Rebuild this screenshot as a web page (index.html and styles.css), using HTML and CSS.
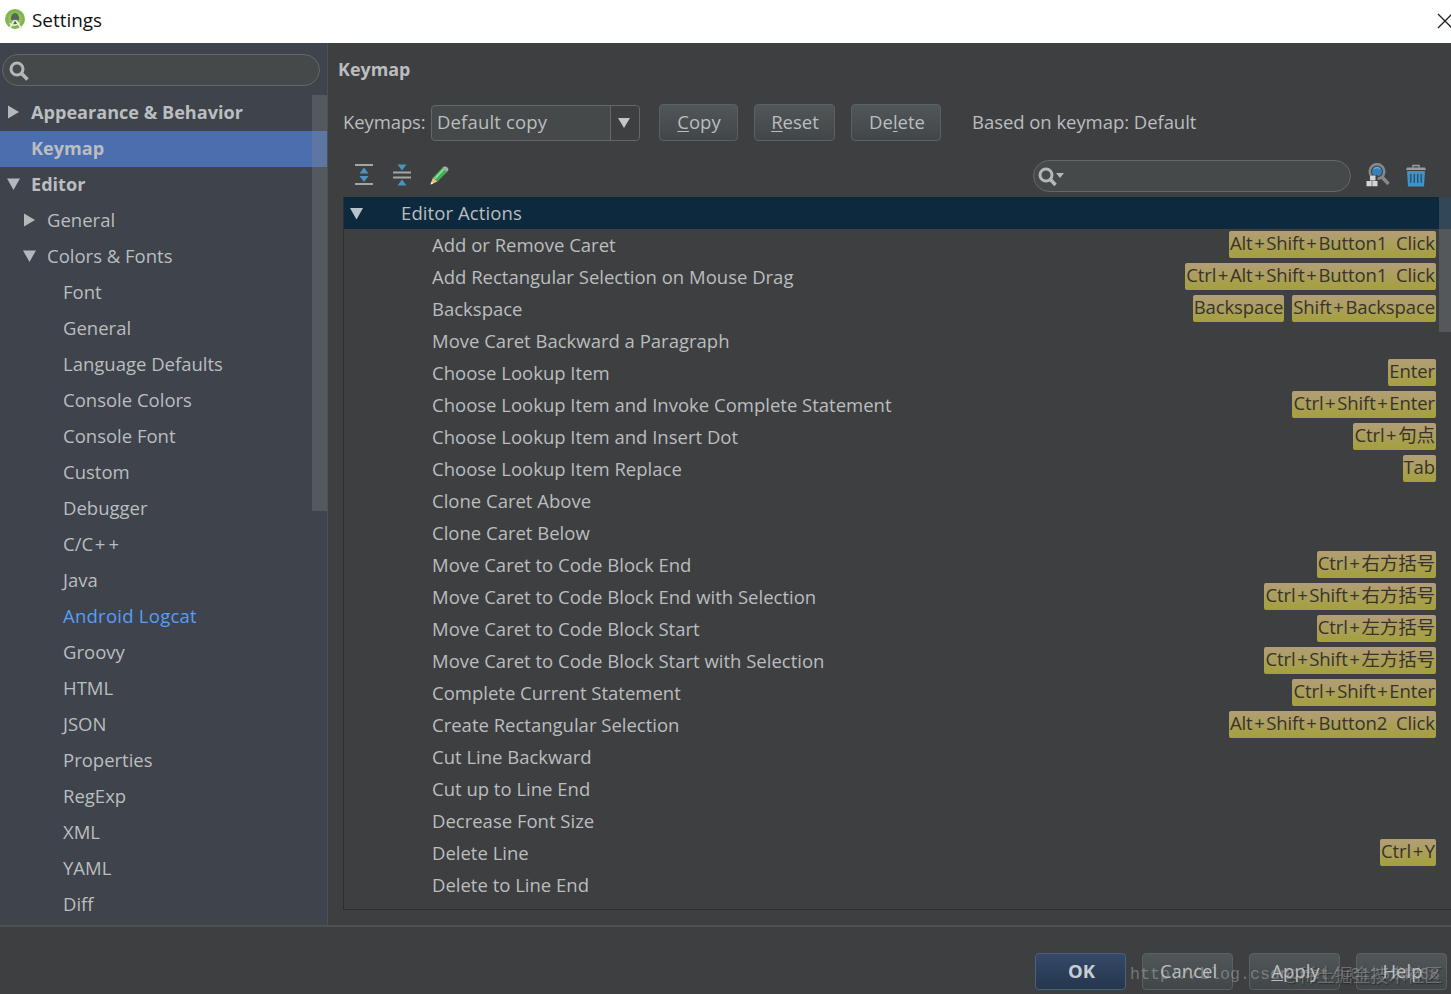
FILE: index.html
```html
<!DOCTYPE html>
<html lang="en">
<head>
<meta charset="utf-8">
<title>Settings</title>
<link rel="stylesheet" href="styles.css">
</head>
<body>
<div class="window">
  <header class="titlebar">
    <svg class="app-icon" width="22" height="22" viewBox="0 0 22 22"><circle cx="11" cy="10" r="10" fill="#7fb848"/><circle cx="11" cy="10" r="7" fill="#8fbe60"/><path d="M7 9.500a4 5.500 0 0 1 8 0v1.500H7zM9 9h4v6H9z" fill="#596454"/><path d="M10.500 11 5 20.500M11.500 11l6.500 9.500M5.500 14.500q5 4 10-1" stroke="#f0f5ea" stroke-width="1.500" fill="none"/></svg>
    <span class="window-title">Settings</span>
    <svg class="close" width="14" height="16" viewBox="0 0 14 16"><path d="M1 1 15 15M15 1 1 15" stroke="#222" stroke-width="1.300"/></svg>
  </header>
  <div class="body">
    <aside class="sidebar">
      <div class="search side-search"><svg width="20" height="20" viewBox="0 0 20 20"><circle cx="8" cy="8" r="6" fill="none" stroke="#b5b7b8" stroke-width="3"/><path d="M12 12l6.500 6.500" stroke="#b5b7b8" stroke-width="3.500"/></svg></div>
      <nav class="tree" id="tree"></nav>
      <div class="side-thumb"></div>
    </aside>
    <main class="content">
      <h1 class="heading">Keymap</h1>
      <div class="controls">
        <span class="label">Keymaps:</span>
        <div class="combo"><span class="combo-text">Default copy</span><span class="combo-arrow"><svg width="12" height="10" viewBox="0 0 12 10"><path d="M0 0h12L6 10z" fill="#c3c5c6"/></svg></span></div>
        <button class="btn copy"><span><u>C</u>opy</span></button>
        <button class="btn reset"><span><u>R</u>eset</span></button>
        <button class="btn delete"><span>De<u>l</u>ete</span></button>
        <span class="based">Based on keymap: Default</span>
      </div>
      <div class="toolbar">
        <svg class="expand" width="18" height="22" viewBox="0 0 18 22"><path d="M0 1h18M0 20h18" stroke="#a3a5a7" stroke-width="2"/><path d="M9 3.500l4.500 6h-9zM9 18l4.500-6h-9z" fill="#4a94c4"/></svg>
        <svg class="collapse" width="18" height="22" viewBox="0 0 18 22"><path d="M0 8.500h18M0 13.500h18" stroke="#a3a5a7" stroke-width="2"/><path d="M9 6.500l4.500-6h-9zM9 15.500l4.500 6h-9z" fill="#4a94c4"/></svg>
        <svg class="pencil" width="19" height="19" viewBox="0 0 19 19"><path d="M.5 18.500 3 11.500 7.500 15.500z" fill="#efc283"/><path d="M.5 18.500l.9-3 2 2z" fill="#eee"/><path d="M3 11.500 12 2l5 4-9.500 9.500z" fill="#42ad55"/><path d="M4 12 13 2.500l1.500 1.200-9 9.800z" fill="#85dc8d"/><path d="M12 2l2.500-1.800q4 .8 4 3.800L17 6z" fill="#9fb0a2"/></svg>
        <div class="search key-search"><svg width="28" height="20" viewBox="0 0 28 20"><circle cx="8" cy="8" r="6" fill="none" stroke="#b5b7b8" stroke-width="3"/><path d="M12 12l5.500 6" stroke="#b5b7b8" stroke-width="3.500"/><path d="M18 6h8l-4 5z" fill="#b5b7b8"/></svg></div>
        <svg class="find" width="24" height="24" viewBox="0 0 24 24"><circle cx="11" cy="8.500" r="7.300" fill="none" stroke="#85888a" stroke-width="2.600"/><circle cx="11" cy="8.500" r="5" fill="#387fb5"/><path d="M8 6q3-3 6 0" stroke="#69a9d3" stroke-width="1.500" fill="none"/><path d="M16 14l6.500 7" stroke="#85888a" stroke-width="3.500"/><path d="M4.500 12h7v6h1v5.500H0V18h4.500z" fill="#3d3f41"/><path d="M4 12.500h5.500v5H4zM.5 18h5.200v5.200H.5zM6.300 18h5.200v5.200H6.300z" fill="#d4d6d6"/></svg>
        <svg class="trash" width="20" height="23" viewBox="0 0 20 23"><path d="M7 3.500V1.500h6v2" stroke="#9a9da0" stroke-width="1.500" fill="none"/><path d="M0 6l1-2.500h18L20 6z" fill="#9a9da0"/><path d="M1 7h18l-1 15.500H2z" fill="#3f93c8"/><path d="M4.800 10v9M8.300 10v9M11.700 10v9M15.200 10v9" stroke="#214e6d" stroke-width="1.300"/></svg>
      </div>
      <section class="actions">
        <div class="group"><svg width="14" height="12" viewBox="0 0 14 12"><path d="M0 0h13L6.500 11.500z" fill="#b8c3cc"/></svg><span>Editor Actions</span></div>
        <div id="actions"></div>
        <div class="list-thumb"></div>
      </section>
    </main>
  </div>
  <footer class="footer">
    <button class="btn ok"><span>OK</span></button>
    <button class="btn"><span>Cancel</span></button>
    <button class="btn"><span><u>A</u>pply</span></button>
    <button class="btn"><span>Help</span></button>
    <span class="mark-url">http://blog.csdn.net/u012524288</span>
    <span class="mark-site">@稀土掘金技术社区</span>
  </footer>
</div>
<script src="app.js"></script>
</body>
</html>
```
FILE: styles.css
```css
* { box-sizing: border-box; }
body { margin: 0; background: #3d3f41; color: #bbbdbf; font: 18.5px/32px "Open Sans", "Noto Sans CJK SC", sans-serif; }
svg { display: block; flex: none; }
.window { width: 1451px; height: 994px; overflow: hidden; display: flex; flex-direction: column; }
.titlebar { height: 43px; flex: none; background: #fff; color: #111; display: flex; align-items: center; padding: 0 0 3px 4px; }
.window-title { margin-left: 6px; font-size: 18.9px; }
.close { margin-left: auto; margin-top: 1px; }
.body { display: flex; height: 882px; flex: none; }
.sidebar { width: 328px; flex: none; background: #3e434c; border-right: 1px solid #4c5157; position: relative; padding-top: 11px; }
.search { height: 32px; border: 1px solid #636769; border-radius: 16px; background: #45494a; display: flex; align-items: center; }
.side-search { width: 318px; margin-left: 2px; padding: 1px 0 0 6px; }
.tree { margin-top: 9px; }
.node { height: 36px; line-height: 34px; padding-bottom: 2px; display: flex; align-items: center; white-space: nowrap; }
.node span.text { margin-left: 10px; }
.node.l0 { padding-left: 7px; font-weight: 700; font-size: 18.1px; }
.node.l1 { padding-left: 23px; }
.node.l2 { padding-left: 39px; }
.node.selected { background: #4b6eaf; }
.node.link { color: #589df6; letter-spacing: .25px; }
.side-thumb { position: absolute; right: 0; top: 52px; width: 15px; height: 416px; background: rgba(135,138,140,.3); }
.content { flex: 1; min-width: 0; display: flex; flex-direction: column; }
.heading { margin: 10px 0 0 10px; font-size: 17.900px; line-height: 32px; font-weight: 700; }
.controls { height: 38px; margin-top: 18px; display: flex; align-items: center; white-space: nowrap; }
.label { width: 88px; margin-left: 15px; flex: none; letter-spacing: -.1px; }
.combo { width: 209px; height: 36px; margin-top: 1px; border: 1px solid #646869; border-radius: 4px; background: #45494a; display: flex; flex: none; }
.combo-text { flex: 1; padding-left: 5px; line-height: 32px; letter-spacing: .15px; }
.combo-arrow { width: 29px; background: #3d3f41; border-left: 1px solid #646869; border-radius: 0 4px 4px 0; display: flex; align-items: center; padding-left: 7px; }
.btn { height: 37px; padding: 0 0 1px; border: 1px solid #5b6062; border-radius: 4px; background: linear-gradient(#515658, #414648); color: #bbbdbf; font: inherit; flex: none; }
.btn u { text-decoration-thickness: 1px; text-underline-offset: 2px; }
.copy { width: 79px; margin-left: 19px; padding-left: 1px; }
.reset { width: 81px; margin-left: 16px; padding-left: 1px; }
.delete { width: 90px; margin-left: 16px; padding-left: 2px; }
.based { margin-left: 31px; letter-spacing: -.05px; }
.toolbar { height: 56px; display: flex; align-items: center; padding: 12px 0 0 27px; }
.collapse { margin-left: 20px; }
.pencil { margin-left: 19px; }
.key-search { width: 318px; margin-left: 584px; padding: 2px 0 0 4px; margin-top: 1px; }
.find { margin-left: 15px; }
.trash { margin-left: 16px; }
.actions { margin-left: 15px; height: 713px; border-left: 1px solid #2c2f31; border-bottom: 1px solid #2c2f31; position: relative; }
.group { height: 32px; background: #0d293e; display: flex; align-items: center; padding: 1px 0 0 6px; }
.group span { margin-left: 37px; line-height: 32px; margin-top: -1px; letter-spacing: .1px; }
.row { height: 32px; display: flex; padding: 0 15px 0 88px; white-space: nowrap; }
.name { flex: 1; }
.keys { display: flex; gap: 8px; padding-top: 2px; }
.key { height: 27px; line-height: 24px; padding: 0 1px; border-radius: 2px; background: linear-gradient(#b29e78, #a4a03c); color: #38332b; letter-spacing: -.1px; word-spacing: 4px; }
.plus { margin: 0 1.600px; }
.list-thumb { position: absolute; top: 0; right: 0; width: 12px; height: 135px; background: rgba(150,155,160,.27); }
.footer { flex: 1; border-top: 2px solid #4e5152; display: flex; gap: 16px; padding: 26px 0 0 1035px; position: relative; }
.footer .btn { width: 91px; padding-left: 2px; }
.footer .btn span { position: relative; z-index: 2; }
.footer .ok { background: linear-gradient(#34496a, #25364d); border-color: #49617b; font-weight: 700; color: #c9ced3; }
.mark-url { position: absolute; left: 1130px; top: 32px; font: 16.670px/32px "Liberation Mono", monospace; color: rgba(185,190,190,.45); white-space: nowrap; }
.mark-site { position: absolute; left: 1283px; top: 32px; font: 17.900px/32px "Open Sans", "Noto Sans CJK SC", sans-serif; color: rgba(180,180,180,.42); text-shadow: 1px 1px 1px rgba(30,30,30,.6); white-space: nowrap; }
```
FILE: app.js
```js
const nodes = [
  [0, "Appearance & Behavior", "closed"], [0, "Keymap", "", "selected"], [0, "Editor", "open"],
  [1, "General", "closed"], [1, "Colors & Fonts", "open"],
  ...["Font", "General", "Language Defaults", "Console Colors", "Console Font", "Custom", "Debugger", "C/C++", "Java"].map(t => [2, t]),
  [2, "Android Logcat", "", "link"],
  ...["Groovy", "HTML", "JSON", "Properties", "RegExp", "XML", "YAML", "Diff"].map(t => [2, t])
];
const arrows = { closed: "M1 .5v13l11-6.500z", open: "M0 1.500h13L6.500 13z" };
const markup = s => s.replace(/&/g, "&amp;").replace(/\+/g, '<span class="plus">+</span>');
document.getElementById("tree").innerHTML = nodes.map(([level, text, arrow, cls]) =>
  `<div class="node l${level} ${cls || ""}"><svg width="14" height="14" viewBox="0 0 14 14">${arrow ? `<path d="${arrows[arrow]}" fill="#b5b8bb"/>` : ""}</svg><span class="text">${markup(text)}</span></div>`).join("");

const rows = [
  ["Add or Remove Caret", "Alt+Shift+Button1 Click"],
  ["Add Rectangular Selection on Mouse Drag", "Ctrl+Alt+Shift+Button1 Click"],
  ["Backspace", "Backspace", "Shift+Backspace"],
  ["Move Caret Backward a Paragraph"],
  ["Choose Lookup Item", "Enter"],
  ["Choose Lookup Item and Invoke Complete Statement", "Ctrl+Shift+Enter"],
  ["Choose Lookup Item and Insert Dot", "Ctrl+句点"],
  ["Choose Lookup Item Replace", "Tab"],
  ["Clone Caret Above"], ["Clone Caret Below"],
  ["Move Caret to Code Block End", "Ctrl+右方括号"],
  ["Move Caret to Code Block End with Selection", "Ctrl+Shift+右方括号"],
  ["Move Caret to Code Block Start", "Ctrl+左方括号"],
  ["Move Caret to Code Block Start with Selection", "Ctrl+Shift+左方括号"],
  ["Complete Current Statement", "Ctrl+Shift+Enter"],
  ["Create Rectangular Selection", "Alt+Shift+Button2 Click"],
  ["Cut Line Backward"], ["Cut up to Line End"], ["Decrease Font Size"],
  ["Delete Line", "Ctrl+Y"], ["Delete to Line End"]
];
document.getElementById("actions").innerHTML = rows.map(([name, ...keys]) =>
  `<div class="row"><span class="name">${name}</span><span class="keys">${keys.map(k => `<span class="key">${markup(k)}</span>`).join("")}</span></div>`).join("");
```
